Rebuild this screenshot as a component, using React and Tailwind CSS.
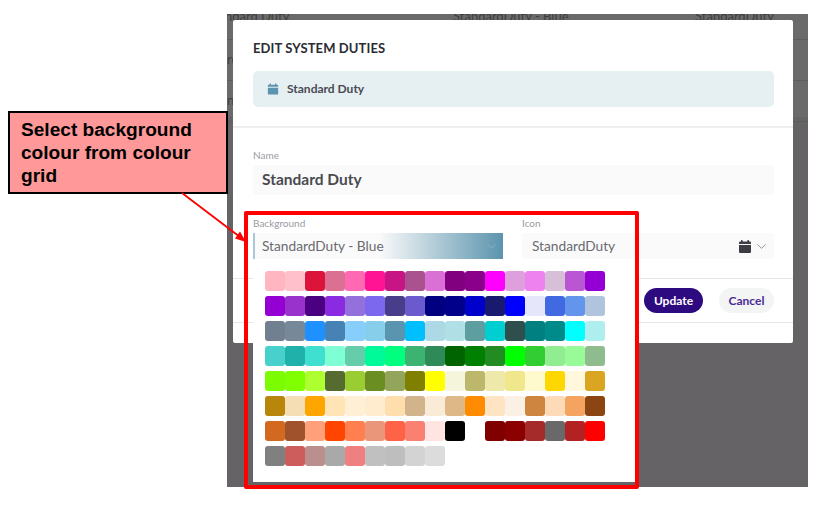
import React from 'react';
import { ChevronDown } from 'lucide-react';

const swatches = [
  'bg-[#FFB6C1]', 'bg-[#FFC0CB]', 'bg-[#DC143C]', 'bg-[#DB7093]', 'bg-[#FF69B4]', 'bg-[#FF1493]', 'bg-[#C71585]', 'bg-[#A9528F]', 'bg-[#DA70D6]', 'bg-[#800080]', 'bg-[#8B008B]', 'bg-[#FF00FF]', 'bg-[#DDA0DD]', 'bg-[#EE82EE]', 'bg-[#D8BFD8]', 'bg-[#BA55D3]', 'bg-[#9400D3]',
  'bg-[#9400D4]', 'bg-[#9932CC]', 'bg-[#4B0082]', 'bg-[#8A2BE2]', 'bg-[#9370DB]', 'bg-[#7B68EE]', 'bg-[#483D8B]', 'bg-[#6A5ACD]', 'bg-[#000080]', 'bg-[#00008B]', 'bg-[#0000CD]', 'bg-[#191970]', 'bg-[#0000FF]', 'bg-[#E6E6FA]', 'bg-[#4169E1]', 'bg-[#6495ED]', 'bg-[#B0C4DE]',
  'bg-[#708090]', 'bg-[#778899]', 'bg-[#1E90FF]', 'bg-[#4682B4]', 'bg-[#87CEFA]', 'bg-[#87CEEB]', 'bg-[#5B94AE]', 'bg-[#00BFFF]', 'bg-[#ADD8E6]', 'bg-[#B0E0E6]', 'bg-[#5F9EA0]', 'bg-[#00CED1]', 'bg-[#2F4F4F]', 'bg-[#008080]', 'bg-[#008B8B]', 'bg-[#00FFFF]', 'bg-[#AFEEEE]',
  'bg-[#48D1CC]', 'bg-[#20B2AA]', 'bg-[#40E0D0]', 'bg-[#7FFFD4]', 'bg-[#66CDAA]', 'bg-[#00FA9A]', 'bg-[#00FF7F]', 'bg-[#3CB371]', 'bg-[#2E8B57]', 'bg-[#006400]', 'bg-[#008000]', 'bg-[#228B22]', 'bg-[#00FF00]', 'bg-[#32CD32]', 'bg-[#90EE90]', 'bg-[#98FB98]', 'bg-[#8FBC8F]',
  'bg-[#7CFC00]', 'bg-[#7FFF00]', 'bg-[#ADFF2F]', 'bg-[#556B2F]', 'bg-[#9ACD32]', 'bg-[#6B8E23]', 'bg-[#93A55A]', 'bg-[#808000]', 'bg-[#FFFF00]', 'bg-[#F5F5DC]', 'bg-[#BDB76B]', 'bg-[#EEE8AA]', 'bg-[#F0E68C]', 'bg-[#FFFACD]', 'bg-[#FFD700]', 'bg-[#FFF8DC]', 'bg-[#DAA520]',
  'bg-[#B8860B]', 'bg-[#F5DEB3]', 'bg-[#FFA500]', 'bg-[#FFE4B5]', 'bg-[#FFEFD5]', 'bg-[#FFEBCD]', 'bg-[#FFDEAD]', 'bg-[#D2B48C]', 'bg-[#FAEBD7]', 'bg-[#DEB887]', 'bg-[#FF8C00]', 'bg-[#FFE4C4]', 'bg-[#FAF0E6]', 'bg-[#CD853F]', 'bg-[#FFDAB9]', 'bg-[#F4A460]', 'bg-[#8B4513]',
  'bg-[#D2691E]', 'bg-[#A0522D]', 'bg-[#FFA07A]', 'bg-[#FF4500]', 'bg-[#FF7F50]', 'bg-[#E9967A]', 'bg-[#FF6347]', 'bg-[#FA8072]', 'bg-[#FFE4E1]', 'bg-[#000000]', 'bg-[#FFFFFF]', 'bg-[#800000]', 'bg-[#8B0000]', 'bg-[#A52A2A]', 'bg-[#696969]', 'bg-[#B22222]', 'bg-[#FF0000]',
  'bg-[#808080]', 'bg-[#CD5C5C]', 'bg-[#BC8F8F]', 'bg-[#A9A9A9]', 'bg-[#F08080]', 'bg-[#C0C0C0]', 'bg-[#BEBEBE]', 'bg-[#D3D3D3]', 'bg-[#DCDCDC]',
];

const CalendarIcon = ({ className }) => (
  <svg viewBox="0 0 14 14" className={className} fill="currentColor">
    <rect x="3" y="0.5" width="1.6" height="3" rx="0.5" />
    <rect x="9.4" y="0.5" width="1.6" height="3" rx="0.5" />
    <path d="M2 2h10a1 1 0 0 1 1 1v1.5H1V3a1 1 0 0 1 1-1z" />
    <path d="M1 5.4h12V12.5a1 1 0 0 1-1 1H2a1 1 0 0 1-1-1z" />
  </svg>
);

export default function App() {
  return (
    <div className="relative w-[813px] h-[507px] bg-white overflow-hidden font-['Lato',sans-serif]">
      {/* dimmed page behind the dialog */}
      <div className="absolute left-[227px] top-[14px] w-[581px] h-[473px] bg-[#656365] overflow-hidden">
        <div className="bg-[#6a6a6a] h-[108px] text-[13px] text-[#3f3f3f]">
          <div className="h-[31px] flex border-b border-[#5d5d5d] leading-[14px] -mt-[5px]">
            <span className="w-[228px] -ml-[2px]">ndard Duty</span>
            <span className="w-[242px]">StandardDuty - Blue</span>
            <span>StandardDuty</span>
          </div>
          <div className="h-[41px] flex items-center border-b border-[#5d5d5d]">ro</div>
          <div className="h-[41px] flex items-center border-b border-[#5d5d5d]">n</div>
        </div>
      </div>

      {/* dialog */}
      <div className="absolute left-[233px] top-[20px] w-[560px] h-[323px] bg-white rounded-[2px] flex flex-col">
        <div className="pt-[20px] px-[20px] text-[13px] leading-[16px] font-bold tracking-[0.1px] text-[#2b2b33]">EDIT SYSTEM DUTIES</div>
        <div className="mt-[15px] ml-[20px] mr-[19px] h-[36px] rounded-[5px] bg-[#e6eff2] flex items-center pl-[14px] pb-[1px] gap-[8px]">
          <CalendarIcon className="w-[12px] h-[12px] text-[#5b94ae]" />
          <span className="text-[12px] font-bold text-[#4a4a52]">Standard Duty</span>
        </div>
        <div className="mt-[19px] h-[2px] bg-[#eeeeee]" />

        <div className="pl-[20px] pr-[19px] pt-[21px]">
          <div className="text-[10px] leading-[12px] text-[#9a9a9f]">Name</div>
          <div className="mt-[4px] h-[30px] rounded-[3px] bg-[#fafafa] flex items-center pl-[9px] text-[15.5px] font-bold text-[#4a4a50]">Standard Duty</div>

          <div className="mt-[22px] flex gap-[19px]">
            <div className="relative w-[250px]">
              <div className="text-[10px] leading-[12px] text-[#9a9a9f]">Background</div>
              <div className="mt-[4px] h-[26px] border-l-2 border-[#a9c9d6] bg-linear-to-r/srgb from-[#fafafa] from-[50%] to-[#5b94ae] flex items-center justify-between pl-[7px] pr-[4px] text-[13.7px] text-[#6a6a6f]">
                <span>StandardDuty - Blue</span>
                <ChevronDown className="w-[15px] h-[15px] text-[#8eb2c1]" strokeWidth={1.5} />
              </div>
              {/* colour grid popover */}
              <div className="absolute left-0 top-full w-[382px] h-[223px] bg-white pt-[12px] pl-[12px] z-10">
                <div className="grid grid-cols-[repeat(17,20px)] auto-rows-[20px] gap-y-[5px]">
                  {swatches.map((c, i) => (
                    <div key={i} className={`rounded-[3px] ${c}`} />
                  ))}
                </div>
              </div>
            </div>
            <div className="flex-1">
              <div className="text-[10px] leading-[12px] text-[#9a9a9f]">Icon</div>
              <div className="mt-[4px] h-[26px] rounded-[3px] bg-[#fafafa] flex items-center justify-between pl-[10px] pr-[5px] text-[13.7px] text-[#6a6a6f]">
                <span>StandardDuty</span>
                <span className="flex items-center gap-[2px]">
                  <CalendarIcon className="w-[14px] h-[15px] text-[#3c3c44]" />
                  <ChevronDown className="w-[15px] h-[15px] text-[#8a8a8f]" strokeWidth={1.5} />
                </span>
              </div>
            </div>
          </div>
        </div>

        <div className="mt-[19px] h-[45px] border-y border-[#e6e6e6] flex items-center justify-end gap-[16px] pr-[19px]">
          <button className="w-[59px] h-[25px] rounded-full bg-[#2e0a80] text-white text-[12px] font-bold">Update</button>
          <button className="w-[55px] h-[25px] rounded-full bg-[#f3f5f5] text-[#4a2a94] text-[12px] font-bold">Cancel</button>
        </div>
      </div>

      {/* annotation */}
      <div className="absolute left-[244px] top-[211px] w-[395px] h-[278px] border-4 border-[#ff0000] rounded-[2px] z-20" />
      <div className="absolute left-[8px] top-[111px] w-[220px] h-[83px] border-2 border-black bg-[#ff9999] pl-[11px] pt-[5px] text-[19.1px] leading-[23px] font-bold text-black font-['Liberation_Sans',sans-serif] z-20">
        Select background colour from colour grid
      </div>
      <svg className="absolute left-0 top-0 z-20" width="813" height="507" fill="none">
        <line x1="182" y1="193" x2="240" y2="237" stroke="#ff0000" strokeWidth="1.8" />
        <path d="M246 242L235 238.5L240 231.5Z" fill="#ff0000" />
      </svg>
    </div>
  );
}
